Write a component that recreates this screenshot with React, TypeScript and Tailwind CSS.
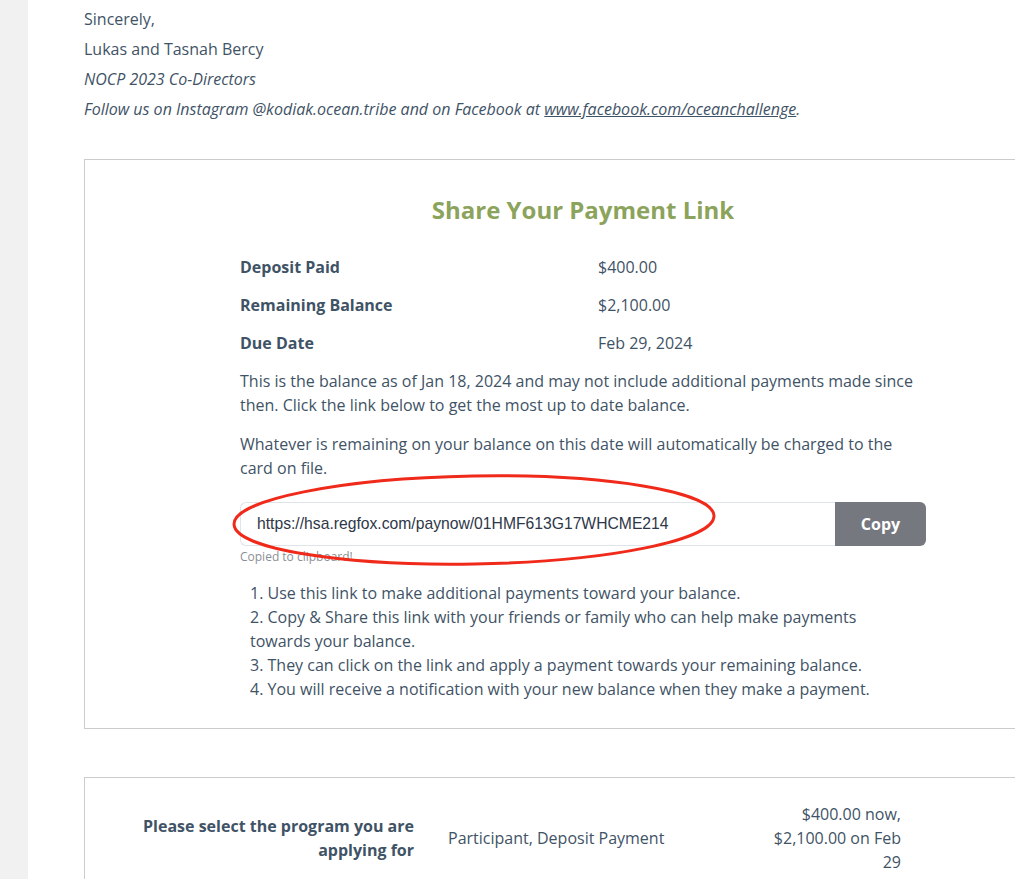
import React from "react";

export default function App() {
  return (
    <div className="flex min-h-[879px] w-[1015px] overflow-hidden bg-white text-[#3f5366]" style={{ fontFamily: "'Open Sans', sans-serif" }}>
      <div className="w-[28px] shrink-0 bg-[#f1f1f1]" />
      <div className="ml-[56px] flex w-[998px] shrink-0 flex-col">
        <div className="pt-[4px] text-[16px] leading-[30px]">
          <p>Sincerely,</p>
          <p>Lukas and Tasnah Bercy</p>
          <p className="italic">NOCP 2023 Co-Directors</p>
          <p className="italic">
            Follow us on Instagram @kodiak.ocean.tribe and on Facebook at{" "}
            <span className="underline">www.facebook.com/oceanchallenge</span>.
          </p>
        </div>

        <div className="mt-[35px] flex flex-col items-center border border-[#cccccc] pb-[27px] pt-[33px]">
          <h2 className="text-[24px] font-bold leading-[34px] text-[#8ca35c]">Share Your Payment Link</h2>
          <div className="mt-[28px] w-[686px] text-[16px]">
            <div className="flex flex-col gap-[14px] leading-[24px]">
              <div className="flex"><span className="w-[358px] font-bold">Deposit Paid</span><span>$400.00</span></div>
              <div className="flex"><span className="w-[358px] font-bold">Remaining Balance</span><span>$2,100.00</span></div>
              <div className="flex"><span className="w-[358px] font-bold">Due Date</span><span>Feb 29, 2024</span></div>
            </div>
            <p className="mt-[14px] leading-[24px]">
              This is the balance as of Jan 18, 2024 and may not include additional payments made since then. Click the link below to get the most up to date balance.
            </p>
            <p className="mt-[15px] leading-[24px]">
              Whatever is remaining on your balance on this date will automatically be charged to the card on file.
            </p>
            <div className="relative mt-[22px]">
              <div className="flex h-[44px]">
                <div className="flex flex-1 items-center rounded-l-[6px] border border-r-0 border-[#dfe4ea] pl-[16px] text-[15.7px] text-[#2d3748]" style={{ fontFamily: "'Liberation Sans', Arial, sans-serif" }}>
                  https://hsa.regfox.com/paynow/01HMF613G17WHCME214
                </div>
                <button className="flex w-[91px] items-center justify-center rounded-r-[6px] bg-[#76787f] text-[16px] font-bold text-white">Copy</button>
              </div>
              <p className="mt-[3px] text-[12px] leading-[16px] text-[#8a8f96]">Copied to clipboard!</p>
              <svg className="pointer-events-none absolute left-[-8px] top-[-28px]" width="500" height="100" viewBox="0 0 500 100">
                <ellipse cx="242" cy="46" rx="240" ry="44" fill="none" stroke="#f02a1a" strokeWidth="3" transform="rotate(-1 242 46)" />
              </svg>
            </div>
            <ol className="mt-[16px] w-[650px] pl-[10px] text-[16px] leading-[24px]">
              <li>1. Use this link to make additional payments toward your balance.</li>
              <li>2. Copy &amp; Share this link with your friends or family who can help make payments towards your balance.</li>
              <li>3. They can click on the link and apply a payment towards your remaining balance.</li>
              <li>4. You will receive a notification with your new balance when they make a payment.</li>
            </ol>
          </div>
        </div>

        <div className="mt-[48px] flex h-[120px] items-start border border-b-0 border-[#cccccc] pt-[24px] text-[16px] leading-[24px]">
          <div className="flex h-[72px] w-[329px] items-center justify-end text-right font-bold">
            <span className="w-[280px]">Please select the program you are applying for</span>
          </div>
          <div className="ml-[34px] flex h-[72px] w-[300px] items-center">Participant, Deposit Payment</div>
          <div className="ml-[23px] w-[130px] text-right">$400.00 now, $2,100.00 on Feb 29</div>
        </div>
      </div>
    </div>
  );
}
